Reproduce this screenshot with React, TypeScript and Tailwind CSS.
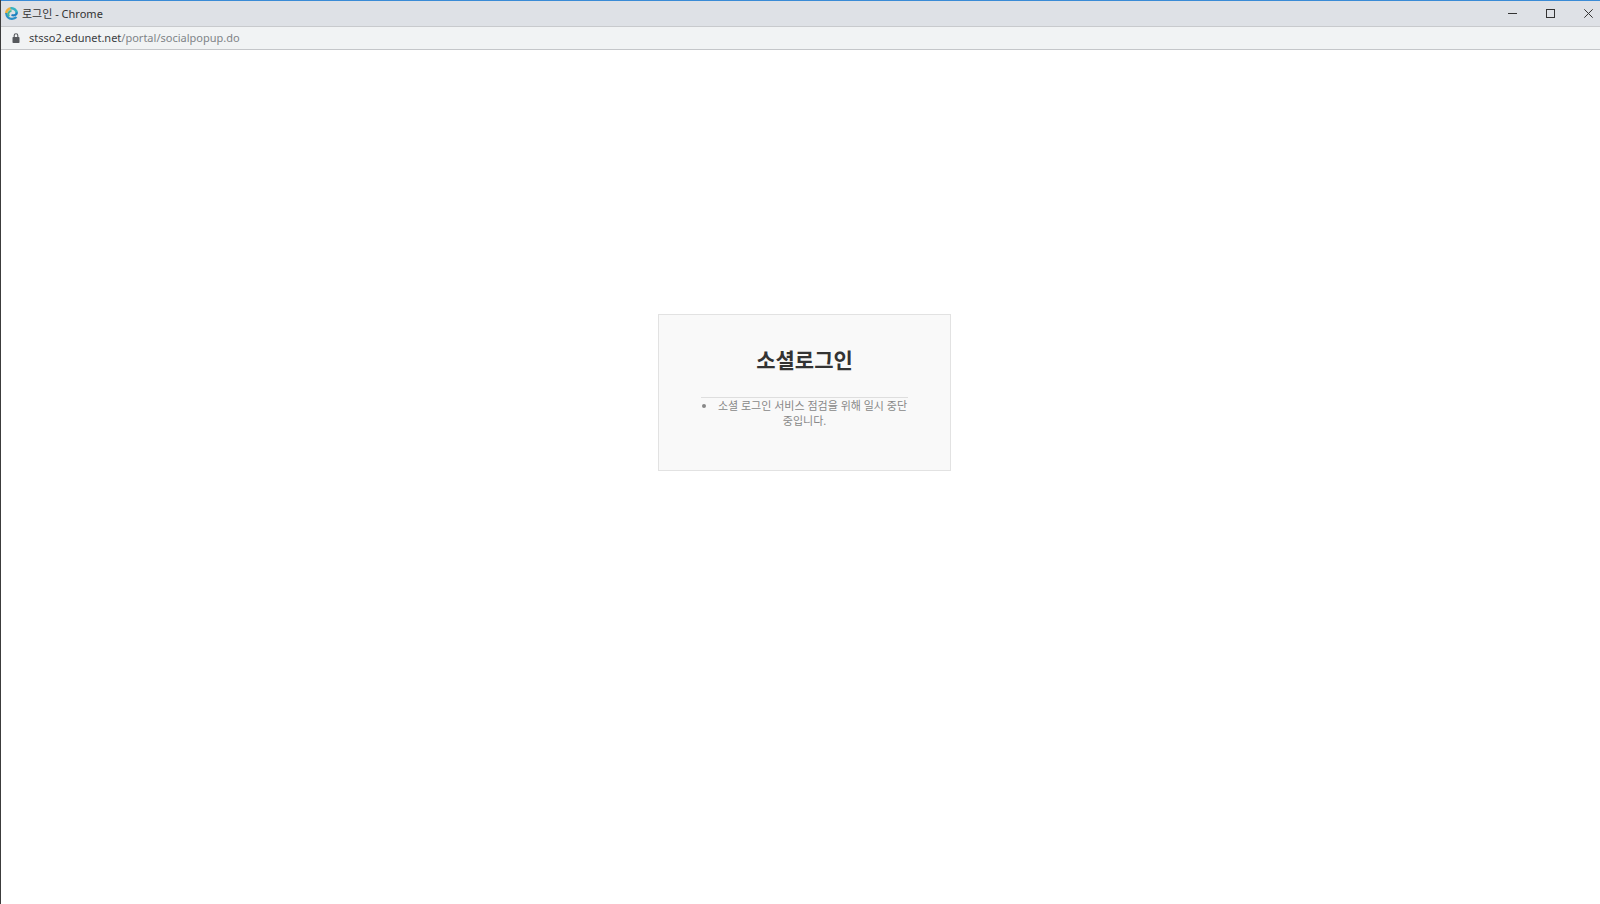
import React from 'react';

const host = 'stsso2.edunet.net';
const path = '/portal/socialpopup.do';

const EdunetIcon = () => (
  <svg viewBox="0 0 26 26" className="w-[13px] h-[13px]" fill="none" aria-hidden="true">
    <path d="M2.5 14 C2 7 7 2.5 13 2.5" stroke="#efb03c" strokeWidth="5" />
    <path d="M11 2.5 C18 2 23.5 6 23.5 13" stroke="#35b3c4" strokeWidth="5" />
    <path d="M23.5 11 C23.5 16.5 18 17.5 13 16" stroke="#1c7fc0" strokeWidth="4.5" />
    <path d="M2.5 12 C3 20 8 23.5 14 23.5 C18 23.5 21 22 23 20" stroke="#2a8fc8" strokeWidth="4.5" />
    <path d="M8 19 C5 14 7 8 13 8" stroke="#43b796" strokeWidth="4" />
  </svg>
);

const LockIcon = () => (
  <svg viewBox="0 0 8 10" className="w-2 h-[10px]" aria-hidden="true">
    <rect x="0.5" y="4" width="7" height="6" rx="0.8" fill="#55585c" />
    <path d="M2.2 4.5 V2.6 a1.8 1.8 0 0 1 3.6 0 V4.5" fill="none" stroke="#55585c" strokeWidth="1.1" />
  </svg>
);

const TitleBar = () => (
  <header className="flex h-[26px] items-center justify-between border-t border-[#3a8bd6] bg-[#dee1e6]">
    <div className="flex items-center gap-1 pl-1">
      <EdunetIcon />
      <h1 className="text-[11px] leading-4 text-[#333]">로그인 - Chrome</h1>
    </div>
    <div className="flex h-full gap-[14px] text-[#333]">
      <button type="button" aria-label="최소화" className="flex w-6 items-center justify-center">
        <svg viewBox="0 0 9 9" className="w-[9px] h-[9px]" stroke="currentColor">
          <path d="M0 4.5 H9" />
        </svg>
      </button>
      <button type="button" aria-label="최대화" className="flex w-6 items-center justify-center">
        <svg viewBox="0 0 9 9" className="w-[9px] h-[9px]" fill="none" stroke="currentColor">
          <rect x="0.5" y="0.5" width="8" height="8" />
        </svg>
      </button>
      <button type="button" aria-label="닫기" className="flex w-6 items-center justify-center">
        <svg viewBox="0 0 9 9" className="w-[9px] h-[9px]" stroke="currentColor">
          <path d="M0.3 0.3 L8.7 8.7 M8.7 0.3 L0.3 8.7" />
        </svg>
      </button>
    </div>
  </header>
);

const AddressBar = () => (
  <div className="flex h-6 items-center gap-[9px] border-t border-b border-t-[#c8cacd] border-b-[#c4c6c9] bg-[#f1f3f4] pl-[11px]">
    <LockIcon />
    <p className="text-[11px] leading-4 text-[#808488]">
      <span className="text-[#3c4043]">{host}</span>
      {path}
    </p>
  </div>
);

export default function App() {
  return (
    <div className="flex min-h-screen flex-col border-l border-[#3c3c3c] bg-white font-['Noto_Sans','Noto_Sans_CJK_KR',sans-serif]">
      <TitleBar />
      <AddressBar />
      <main className="flex justify-center pl-2 pt-[264px]">
        <section className="w-[293px] border border-[#e2e2e2] bg-[#f9f9f9] px-[42px] pb-[42px] pt-[29px] text-center">
          <h2 className="border-b border-[#dedede] pb-[21px] text-[21px] font-bold leading-8 text-[#333]">소셜로그인</h2>
          <ul className="list-inside list-disc text-[11px] leading-[15px] text-[#888]">
            <li>소셜 로그인 서비스 점검을 위해 일시 중단 중입니다.</li>
          </ul>
        </section>
      </main>
    </div>
  );
}
